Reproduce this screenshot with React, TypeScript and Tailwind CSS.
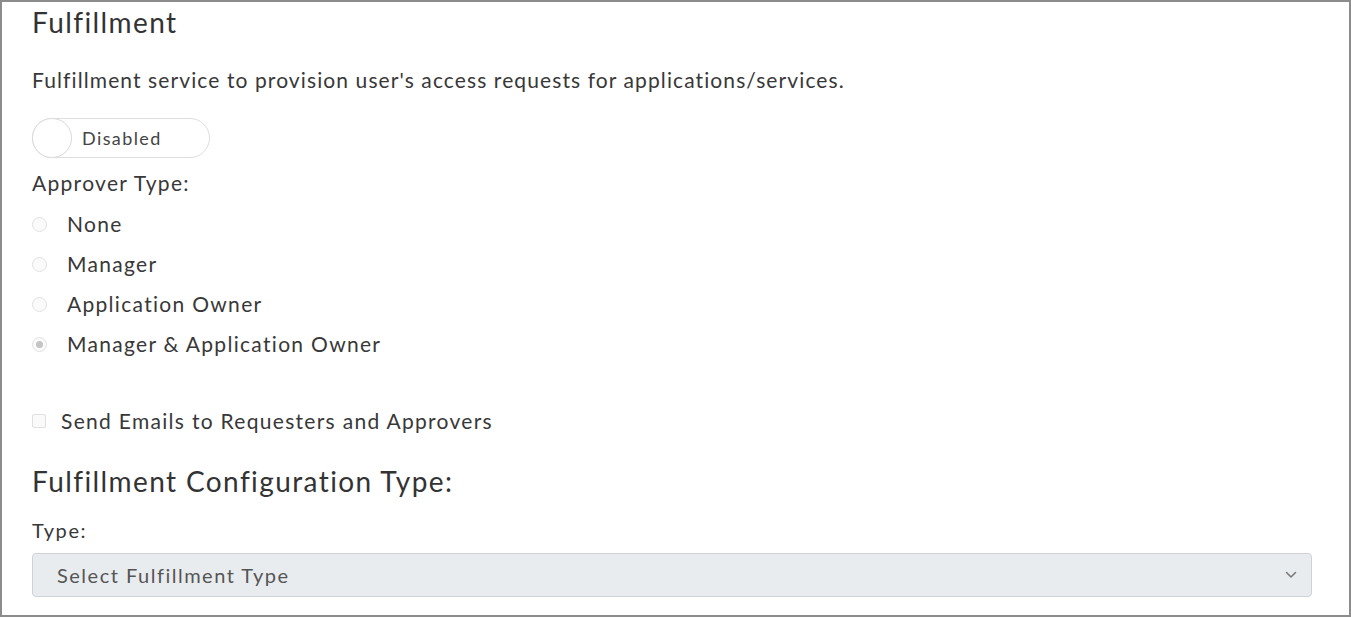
import React, { useState } from 'react';

const approverTypes = ['None', 'Manager', 'Application Owner', 'Manager & Application Owner'];

const App: React.FC = () => {
  const [approver, setApprover] = useState('Manager & Application Owner');
  const [sendEmails, setSendEmails] = useState(false);

  return (
    <div className="w-[1351px] h-[618px] bg-white font-['Lato','Liberation_Sans',sans-serif] text-[#383838]">
      <div className="h-[617px] border-2 border-[#8c8c8c] pl-[30px] pr-[35px] pt-[4px] flex flex-col">
        <h2 className="text-[28px] leading-[32px] tracking-[1.4px] text-[#333]">Fulfillment</h2>

        <p className="mt-[28px] text-[21px] leading-[28px] tracking-[1.1px]">
          Fulfillment service to provision user's access requests for applications/services.
        </p>

        {/* toggle */}
        <div className="mt-[24px] w-[178px] h-[40px] rounded-full border border-[#dedede] flex items-center">
          <div className="w-[40px] h-[40px] -ml-px rounded-full border border-[#dcdcdc] bg-white shadow-[0_0_1px_rgba(0,0,0,0.05)]" />
          <span className="ml-[10px] text-[18px] tracking-[1.4px] text-[#444]">Disabled</span>
        </div>

        <div className="mt-[11px] text-[21px] leading-[28px] tracking-[1.3px]">Approver Type:</div>

        <div className="mt-[7px] flex flex-col">
          {approverTypes.map(t => (
            <label key={t} className="h-10 flex items-center cursor-pointer" onClick={() => setApprover(t)}>
              <span className="w-[15px] h-[15px] rounded-full border border-[#e2e2e2] bg-[#fafafa] flex items-center justify-center">
                {approver === t && <span className="w-[7px] h-[7px] rounded-full bg-[#c4c4c4]" />}
              </span>
              <span className="ml-[20px] text-[21px] leading-[28px] tracking-[1.3px]">{t}</span>
            </label>
          ))}
        </div>

        <label className="mt-[43px] h-[28px] flex items-center cursor-pointer" onClick={() => setSendEmails(!sendEmails)}>
          <span className="w-[14px] h-[14px] rounded-[2px] border border-[#e0e0e0] bg-[#fafafa]" />
          <span className="ml-[15px] text-[21px] leading-[28px] tracking-[1.3px]">Send Emails to Requesters and Approvers</span>
        </label>

        <h3 className="mt-[28px] text-[28px] leading-[36px] tracking-[1.4px] text-[#333]">Fulfillment Configuration Type:</h3>

        <div className="mt-[19px] text-[20px] leading-[24px] tracking-[1.6px]">Type:</div>

        <div className="mt-[11px] w-[1280px] h-[44px] rounded-[4px] border border-[#cfd2d5] bg-[#e9ecef] flex items-center justify-between pl-[24px] pr-[14px]">
          <span className="text-[20px] tracking-[1.5px] text-[#555]">Select Fulfillment Type</span>
          <svg width="12" height="8" viewBox="0 0 12 8" fill="none" stroke="#777" strokeWidth="1.5" strokeLinecap="round" strokeLinejoin="round">
            <path d="M1.5 1.5 6 6l4.5-4.5" />
          </svg>
        </div>
      </div>
    </div>
  );
};

export default App;
